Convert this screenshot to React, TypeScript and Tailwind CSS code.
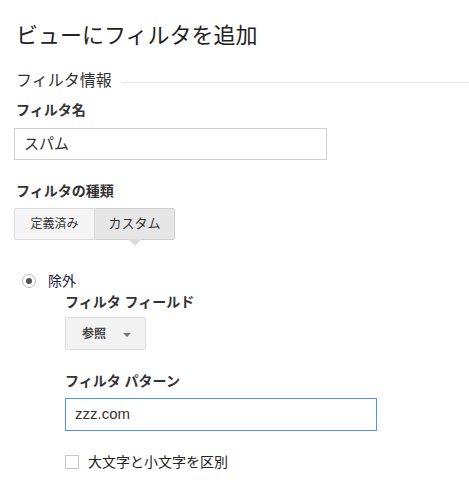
import React from 'react';

const jp = { fontFamily: '"Liberation Sans", "Noto Sans CJK JP", sans-serif' };

const App: React.FC = () => {
  return (
    <div className="w-[469px] h-[491px] bg-white text-[#222] overflow-hidden" style={jp}>
      {/* Title */}
      <h1 className="pl-4 pt-[21px] text-[22px] leading-[30px] font-normal text-[#222]">ビューにフィルタを追加</h1>

      {/* Section header */}
      <div className="flex items-center pl-4 mt-[19px]">
        <span className="text-[16px] leading-[22px] text-[#333]">フィルタ情報</span>
        <div className="flex-1 h-px bg-[#e5e5e5] ml-[10px] mt-[2px]" />
      </div>

      {/* Filter name */}
      <div className="pl-[14px] mt-[8px]">
        <div className="pl-[2px] text-[14px] leading-[20px] font-bold text-[#333]">フィルタ名</div>
        <div className="mt-[8px] w-[313px] h-[32px] border border-[#d0d0d0] flex items-center px-[9px] text-[15px] text-[#333]">
          スパム
        </div>
      </div>

      {/* Filter type */}
      <div className="pl-[14px] mt-[21px]">
        <div className="pl-[2px] text-[14px] leading-[20px] font-bold text-[#333]">フィルタの種類</div>
        <div className="mt-[7px] flex w-[161px] h-[32px] relative">
          <div className="w-[81px] h-full flex items-center justify-center bg-[#f5f5f5] border border-[#dcdcdc] rounded-l-[2px] text-[12px] text-[#333]">
            定義済み
          </div>
          <div className="flex-1 h-full flex items-center justify-center bg-[#e6e6e6] border border-l-0 border-[#d0d0d0] rounded-r-[2px] text-[13px] text-[#333] relative">
            カスタム
            <div className="absolute left-1/2 -translate-x-1/2 top-full w-0 h-0 border-l-[7px] border-r-[7px] border-t-[7px] border-l-transparent border-r-transparent border-t-[#dcdcdc]" />
          </div>
        </div>
      </div>

      {/* Radio: exclude */}
      <div className="flex items-center pl-[22px] mt-[31px]">
        <div className="w-[14px] h-[14px] rounded-full border border-[#bbb] bg-white flex items-center justify-center">
          <div className="w-[6px] h-[6px] rounded-full bg-[#555]" />
        </div>
        <span className="ml-[12px] text-[14px] leading-[20px] text-[#1a1a40]">除外</span>
      </div>

      <div className="pl-[65px]">
        <div className="mt-[1px] text-[14px] leading-[20px] font-bold text-[#333]">フィルタ フィールド</div>
        <div className="mt-[5px] w-[81px] h-[33px] bg-[#f3f3f3] border border-[#dcdcdc] rounded-[2px] flex items-center pl-[16px] text-[12px] font-bold text-[#444]">
          参照
          <div className="ml-[17px] mt-[2px] w-0 h-0 border-l-[4px] border-r-[4px] border-t-[4px] border-l-transparent border-r-transparent border-t-[#777]" />
        </div>

        <div className="mt-[21px] text-[14px] leading-[20px] font-bold text-[#333]">フィルタ パターン</div>
        <div className="mt-[7px] w-[312px] h-[33px] border border-[#4d90fe] flex items-center px-[9px] text-[15px] text-[#333]">
          zzz.com
        </div>

        <div className="flex items-center mt-[21px]">
          <div className="w-[14px] h-[14px] border border-[#c6c6c6] bg-white" />
          <span className="ml-[9px] text-[14px] leading-[20px] text-[#222]">大文字と小文字を区別</span>
        </div>
      </div>
    </div>
  );
};

export default App;
